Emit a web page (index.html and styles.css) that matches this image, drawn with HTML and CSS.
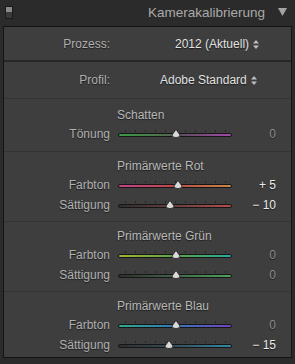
FILE: index.html
```html
<!DOCTYPE html>
<html lang="de">
<head>
  <meta charset="UTF-8">
  <title>Kamerakalibrierung</title>
  <link rel="stylesheet" href="styles.css">
</head>
<body>

  <!-- Panel header -->
  <div class="header">
    <span class="toggle"></span>
    <span class="title">Kamerakalibrierung</span>
    <svg class="caret" width="9" height="8" viewBox="0 0 9 8"><path d="M0 0 H9 L4.5 8 Z" fill="#a3a3a3"/></svg>
  </div>

  <div class="panel">

    <!-- Popups -->
    <div class="popup-row process">
      <span class="label">Prozess:</span>
      <span class="popup">2012 (Aktuell)
        <svg class="updown" width="6" height="9" viewBox="0 0 6 9"><path d="M3 0 L6 3.5 H0 Z M3 9 L6 5.5 H0 Z" fill="#bdbdbd"/></svg>
      </span>
    </div>
    <div class="popup-row profile">
      <span class="label">Profil:</span>
      <span class="popup">Adobe Standard
        <svg class="updown" width="6" height="9" viewBox="0 0 6 9"><path d="M3 0 L6 3.5 H0 Z M3 9 L6 5.5 H0 Z" fill="#bdbdbd"/></svg>
      </span>
    </div>

    <!-- Schatten -->
    <div class="group shadows">
      <div class="group-title">Schatten</div>
      <div class="slider-row">
        <span class="label">Tönung</span>
        <div class="slider">
          <div class="ticks"></div>
          <div class="track tint"></div>
          <svg class="thumb" style="left: 53px" width="10" height="9" viewBox="0 0 10 9"><path d="M5 0.5 L9 6 A4 2.6 0 0 1 1 6 Z" fill="#d9d9d9" stroke="#1e1e1e" stroke-width="0.8"/></svg>
        </div>
        <span class="value">0</span>
      </div>
    </div>

    <!-- Rot -->
    <div class="group">
      <div class="group-title">Primärwerte Rot</div>
      <div class="slider-row">
        <span class="label">Farbton</span>
        <div class="slider">
          <div class="ticks"></div>
          <div class="track red-hue"></div>
          <svg class="thumb" style="left: 55px" width="10" height="9" viewBox="0 0 10 9"><path d="M5 0.5 L9 6 A4 2.6 0 0 1 1 6 Z" fill="#d9d9d9" stroke="#1e1e1e" stroke-width="0.8"/></svg>
        </div>
        <span class="value active">+ 5</span>
      </div>
      <div class="slider-row">
        <span class="label">Sättigung</span>
        <div class="slider">
          <div class="ticks"></div>
          <div class="track red-sat"></div>
          <svg class="thumb" style="left: 47px" width="10" height="9" viewBox="0 0 10 9"><path d="M5 0.5 L9 6 A4 2.6 0 0 1 1 6 Z" fill="#d9d9d9" stroke="#1e1e1e" stroke-width="0.8"/></svg>
        </div>
        <span class="value active">− 10</span>
      </div>
    </div>

    <!-- Grün -->
    <div class="group">
      <div class="group-title">Primärwerte Grün</div>
      <div class="slider-row">
        <span class="label">Farbton</span>
        <div class="slider">
          <div class="ticks"></div>
          <div class="track green-hue"></div>
          <svg class="thumb" style="left: 53px" width="10" height="9" viewBox="0 0 10 9"><path d="M5 0.5 L9 6 A4 2.6 0 0 1 1 6 Z" fill="#d9d9d9" stroke="#1e1e1e" stroke-width="0.8"/></svg>
        </div>
        <span class="value">0</span>
      </div>
      <div class="slider-row">
        <span class="label">Sättigung</span>
        <div class="slider">
          <div class="ticks"></div>
          <div class="track green-sat"></div>
          <svg class="thumb" style="left: 53px" width="10" height="9" viewBox="0 0 10 9"><path d="M5 0.5 L9 6 A4 2.6 0 0 1 1 6 Z" fill="#d9d9d9" stroke="#1e1e1e" stroke-width="0.8"/></svg>
        </div>
        <span class="value">0</span>
      </div>
    </div>

    <!-- Blau -->
    <div class="group last">
      <div class="group-title">Primärwerte Blau</div>
      <div class="slider-row">
        <span class="label">Farbton</span>
        <div class="slider">
          <div class="ticks"></div>
          <div class="track blue-hue"></div>
          <svg class="thumb" style="left: 53px" width="10" height="9" viewBox="0 0 10 9"><path d="M5 0.5 L9 6 A4 2.6 0 0 1 1 6 Z" fill="#d9d9d9" stroke="#1e1e1e" stroke-width="0.8"/></svg>
        </div>
        <span class="value">0</span>
      </div>
      <div class="slider-row">
        <span class="label">Sättigung</span>
        <div class="slider">
          <div class="ticks"></div>
          <div class="track blue-sat"></div>
          <svg class="thumb" style="left: 46px" width="10" height="9" viewBox="0 0 10 9"><path d="M5 0.5 L9 6 A4 2.6 0 0 1 1 6 Z" fill="#d9d9d9" stroke="#1e1e1e" stroke-width="0.8"/></svg>
        </div>
        <span class="value active">− 15</span>
      </div>
    </div>

  </div>

</body>
</html>
```

FILE: styles.css
```css
body {
  margin: 0;
  background-color: #2b2b2b;
  font-family: "Liberation Sans", Arial, sans-serif;
  font-size: 12px;
  color: #b5b5b5;
  width: 295px;
  height: 364px;
  overflow: hidden;
}

.header {
  height: 26px;
  display: flex;
  align-items: center;
  padding: 0 8px 0 5px;
}

.toggle {
  width: 6px;
  height: 11px;
  border: 1px solid #1a1a1a;
  background: linear-gradient(to bottom, #8a8a8a 0 50%, #3a3a3a 50% 100%);
  margin-top: -2px;
}

.title {
  margin-left: auto;
  font-size: 13.5px;
  color: #a9a9a9;
  margin-right: 13px;
  margin-top: -1px;
}

.caret {
  margin-top: -2px;
}

.panel {
  margin: 0 3px;
  height: 330px;
  border: 1px solid #141414;
  background-color: #3e3e3e;
  text-shadow: 0 1px 1px rgba(0, 0, 0, 0.55);
}

.label {
  text-align: right;
  color: #b0b0b0;
}

.popup-row {
  display: grid;
  grid-template-columns: 106px 1fr;
  align-items: center;
}

.popup-row.process {
  height: 33px;
  border-bottom: 2px solid #262626;
}

.popup-row.profile {
  height: 36px;
  border-bottom: 1px solid #333333;
}

.popup {
  color: #e2e2e2;
  display: flex;
  align-items: center;
  gap: 4px;
}

.process .popup {
  padding-left: 65px;
}

.profile .popup {
  padding-left: 50px;
}

.updown {
  margin-top: 1px;
}

.group {
  padding: 5px 0 6px;
  border-bottom: 1px solid #333333;
}

.group.shadows {
  padding: 7px 0 7px;
}

.group.last {
  border-bottom: none;
}

.group-title {
  height: 18px;
  line-height: 18px;
  padding-left: 113px;
  color: #b8b8b8;
}

.slider-row {
  display: grid;
  grid-template-columns: 106px 122px 44px;
  height: 20px;
  align-items: center;
}

.slider {
  position: relative;
  height: 20px;
  width: 114px;
  margin-left: 8px;
}

.ticks {
  position: absolute;
  left: 7px;
  top: 6px;
  width: 102px;
  height: 2px;
  background: repeating-linear-gradient(to right, #262626 0 1px, transparent 1px 10px);
}

.track {
  position: absolute;
  left: 0;
  right: 0;
  top: 9px;
  height: 2px;
  border: 1px solid #161616;
  border-radius: 3px;
}

.track.tint {
  background: linear-gradient(to right, #3b9a46, #4f6a50 45%, #5e4e5e 55%, #a548a8);
}

.track.red-hue {
  background: linear-gradient(to right, #c2448a, #c04848 50%, #c48844);
}

.track.red-sat {
  background: linear-gradient(to right, #2e2e2e, #6a4040 50%, #b44c4c);
}

.track.green-hue {
  background: linear-gradient(to right, #a8b236, #5aa448 50%, #2aa89a);
}

.track.green-sat {
  background: linear-gradient(to right, #2e2e2e, #44664a 50%, #4aa25a);
}

.track.blue-hue {
  background: linear-gradient(to right, #2eaa8c, #3278b8 50%, #7442c2);
}

.track.blue-sat {
  background: linear-gradient(to right, #2e2e2e, #34505c 50%, #3288a4);
}

.thumb {
  position: absolute;
  top: 5px;
}

.value {
  text-align: right;
  color: #8c8c8c;
}

.value.active {
  color: #eaeaea;
}
```
